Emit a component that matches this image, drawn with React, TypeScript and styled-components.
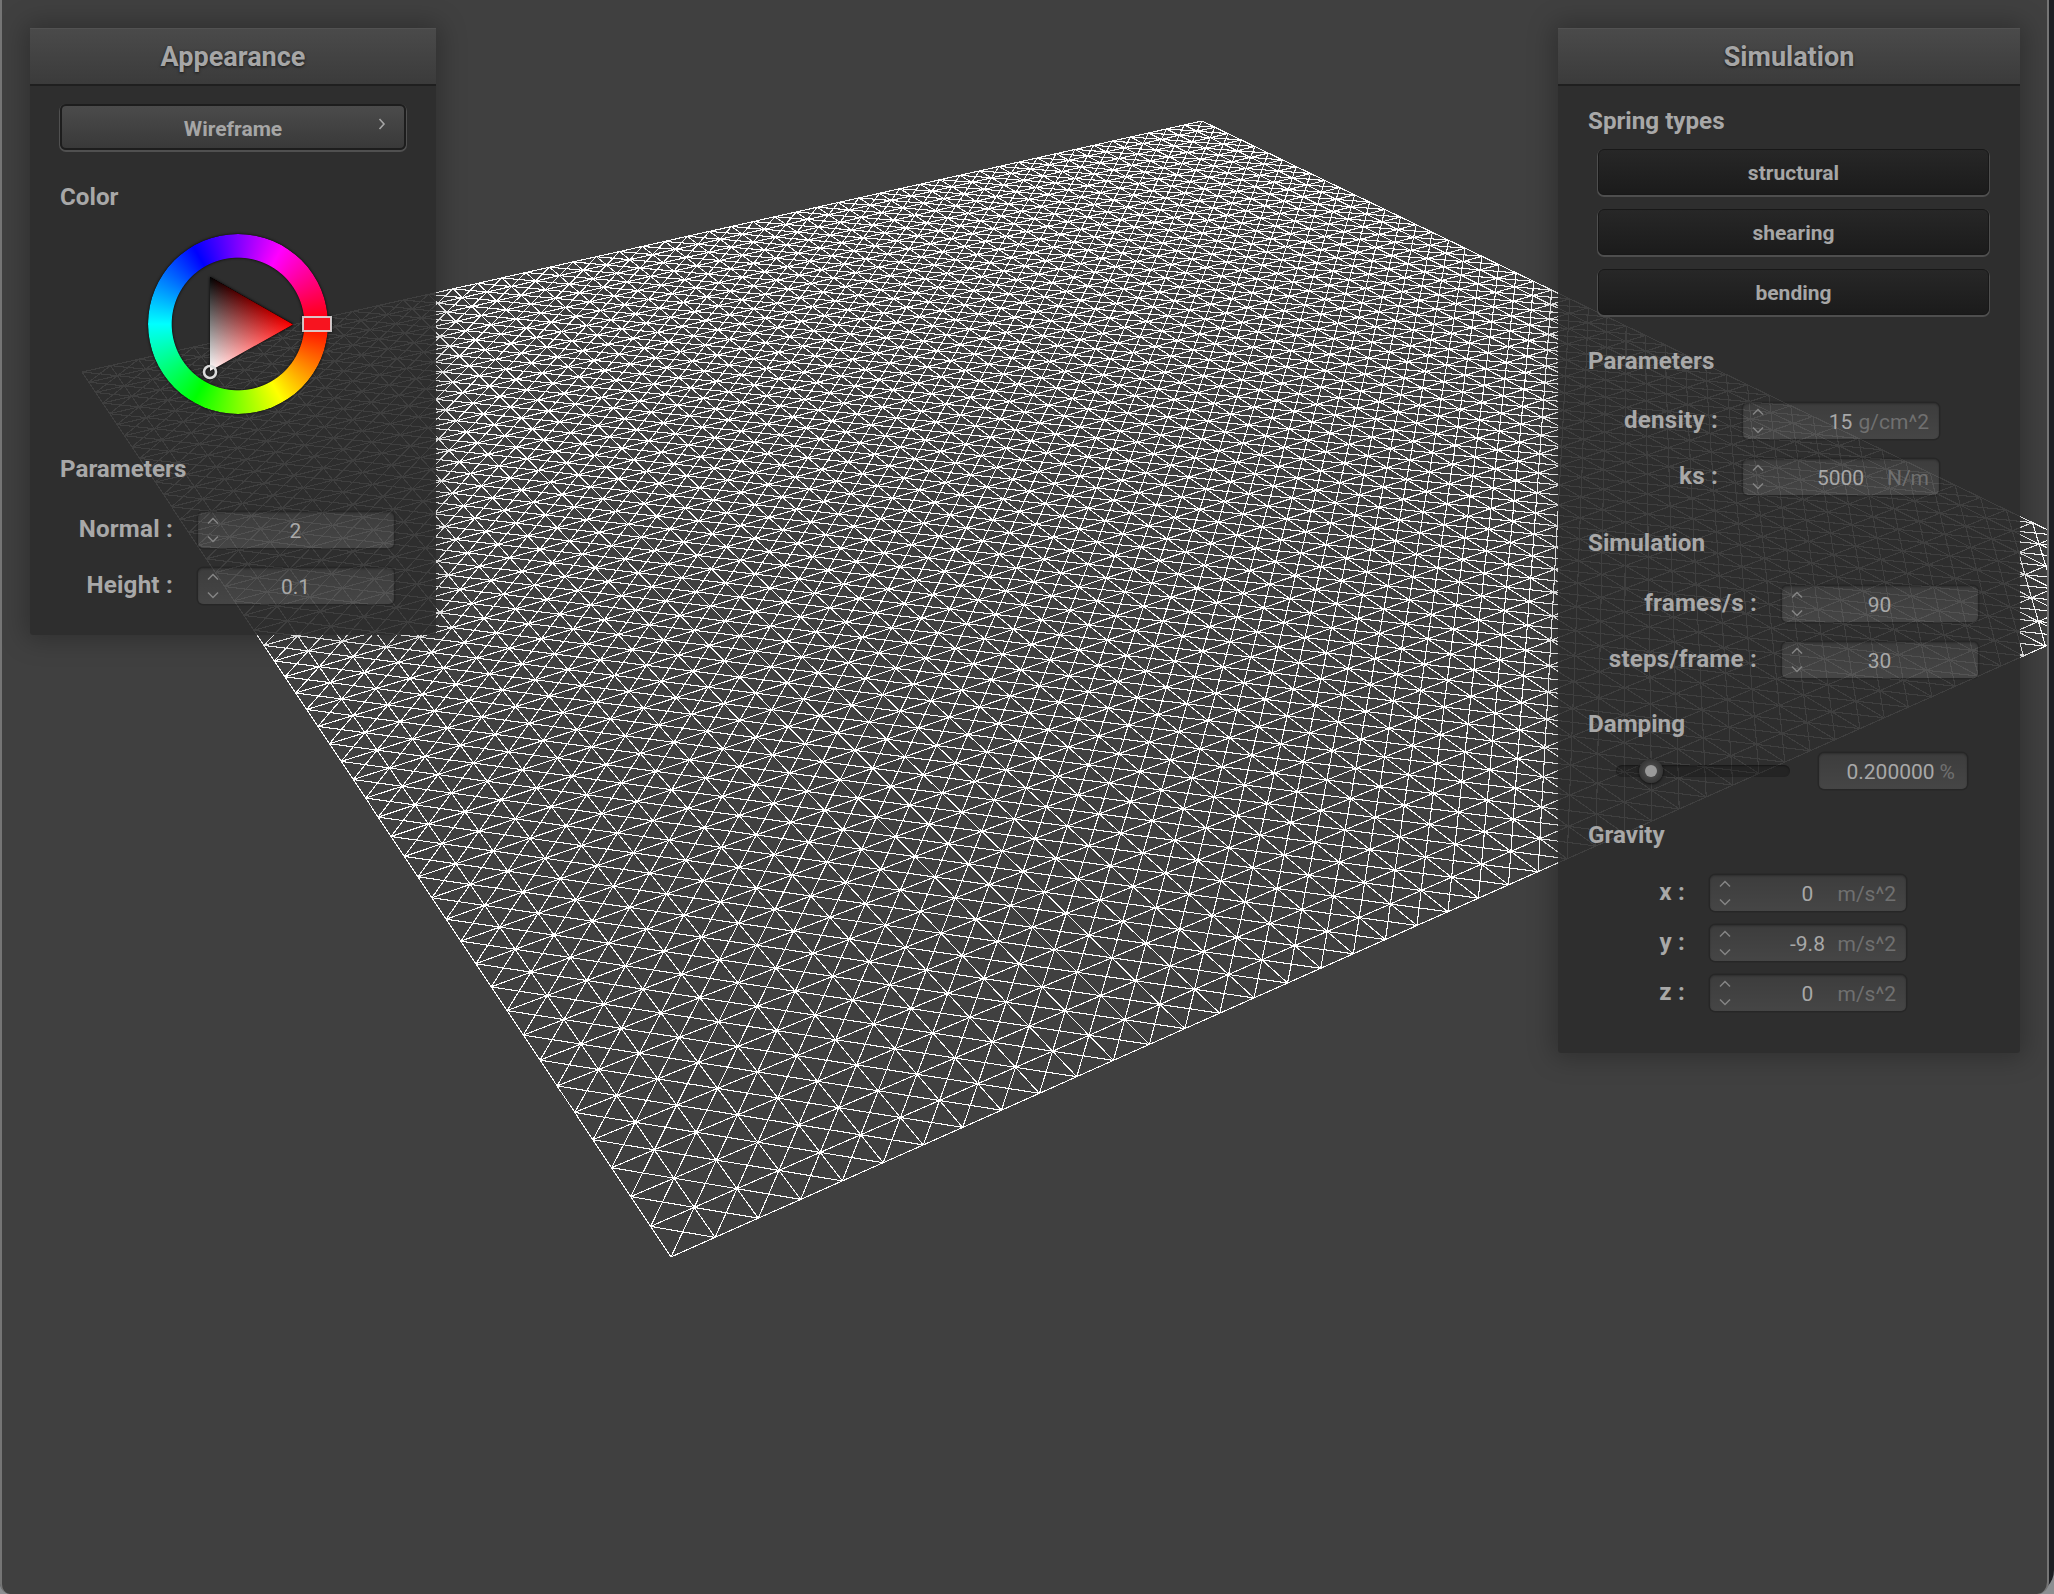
import styled, { createGlobalStyle } from 'styled-components';

const GlobalStyle = createGlobalStyle`
  html, body {
    margin: 0;
    padding: 0;
    background: #8b8e91;
    overflow: hidden;
  }
  body {
    font-family: Roboto, "Liberation Sans", sans-serif;
  }
`;

// projective map of the cloth quad, taken from the four corners on screen
const CORNERS = { c: [671, 1257], b: [2172, 590], a: [1202, 121], d: [82, 372] };
const CELLS = 50;

const buildMesh = () => {
  const { a, b, c, d } = CORNERS;
  const sx = c[0] - b[0] + a[0] - d[0];
  const sy = c[1] - b[1] + a[1] - d[1];
  const dx1 = b[0] - a[0];
  const dx2 = d[0] - a[0];
  const dy1 = b[1] - a[1];
  const dy2 = d[1] - a[1];
  const den = dx1 * dy2 - dx2 * dy1;
  const g = (sx * dy2 - dx2 * sy) / den;
  const h = (dx1 * sy - sx * dy1) / den;
  const project = (i: number, j: number) => {
    const u = i / CELLS;
    const v = j / CELLS;
    const w = g * u + h * v + 1;
    const x = ((b[0] - c[0] + g * b[0]) * u + (d[0] - c[0] + h * d[0]) * v + c[0]) / w;
    const y = ((b[1] - c[1] + g * b[1]) * u + (d[1] - c[1] + h * d[1]) * v + c[1]) / w;
    return `${x.toFixed(1)} ${y.toFixed(1)}`;
  };
  const parts: string[] = [];
  for (let i = 0; i <= CELLS; i++) {
    for (let j = 0; j <= CELLS; j++) {
      if (i < CELLS) parts.push(`M${project(i, j)}L${project(i + 1, j)}`);
      if (j < CELLS) parts.push(`M${project(i, j)}L${project(i, j + 1)}`);
      if (i < CELLS && j < CELLS) {
        parts.push(`M${project(i, j)}L${project(i + 1, j + 1)}`);
        parts.push(`M${project(i + 1, j)}L${project(i, j + 1)}`);
      }
    }
  }
  return parts.join('');
};

const meshPath = buildMesh();

const Frame = styled.div`
  width: 2054px;
  height: 1594px;
  box-sizing: border-box;
  padding-right: 5px;
  background: #1c1e22;
  border-bottom-right-radius: 24px;
  border-bottom-left-radius: 12px;
`;

const Desktop = styled.main`
  position: relative;
  height: 100%;
  box-sizing: border-box;
  background: #404040;
  border-left: 2px solid #757575;
  border-right: 2px solid #757575;
  border-bottom-right-radius: 12px;
  border-bottom-left-radius: 10px;
  overflow: hidden;
`;

const MeshLayer = styled.svg`
  position: absolute;
  left: -2px;
  top: 0;
`;

const Panel = styled.section<{ $left: number; $width: number }>`
  position: absolute;
  top: 28px;
  left: ${(p) => p.$left}px;
  width: ${(p) => p.$width}px;
  background: rgba(44, 44, 44, 0.91);
  border-radius: 3px;
  box-shadow: 0 0 26px 5px rgba(0, 0, 0, 0.26);
`;

const TitleBar = styled.header`
  height: 55px;
  display: flex;
  align-items: center;
  justify-content: center;
  background: linear-gradient(#4a4a4a, #3b3b3b);
  border-top: 1px solid #525252;
  border-bottom: 2px solid #1f1f1f;
  box-sizing: content-box;
  font-size: 27px;
  font-weight: 700;
  color: #a6a6a6;
  text-shadow: 0 1px 3px rgba(0, 0, 0, 0.65);
`;

const PanelBody = styled.div<{ $pad: number; $bottom: number }>`
  padding: 0 ${(p) => p.$pad}px ${(p) => p.$bottom}px;
`;

const Heading = styled.h3<{ $top: number }>`
  margin: ${(p) => p.$top}px 0 0;
  height: 28px;
  line-height: 28px;
  font-size: 24.2px;
  font-weight: 700;
  color: #a8a8a8;
`;

const Dropdown = styled.div`
  position: relative;
  height: 46px;
  width: 346px;
  margin-top: 18px;
  box-sizing: border-box;
  display: flex;
  align-items: center;
  justify-content: center;
  background: linear-gradient(#4b4b4b, #393939);
  border: 2px solid #1d1d1d;
  border-radius: 6px;
  box-shadow: 0 1px 0 1px #505050;
  font-size: 21px;
  font-weight: 700;
  color: #a6a6a6;
  padding-top: 4px;
`;

const DropdownChevron = styled.svg`
  position: absolute;
  right: 18px;
  top: 12px;
`;

const WheelWrap = styled.div`
  position: relative;
  width: 180px;
  height: 180px;
  margin: 23px 0 0 88px;
  filter: drop-shadow(0 0 1.5px rgba(0, 0, 0, 0.9));
`;

const WheelRing = styled.div`
  width: 100%;
  height: 100%;
  border-radius: 50%;
  background: conic-gradient(from 90deg, #ff0000, #ffff00, #00ff00, #00ffff, #0000ff, #ff00ff, #ff0000);
  -webkit-mask: radial-gradient(closest-side, transparent 73.2%, #000 74.2%);
  mask: radial-gradient(closest-side, transparent 73.2%, #000 74.2%);
`;

const WheelOverlay = styled.svg`
  position: absolute;
  left: 0;
  top: 0;
  overflow: visible;
`;

const TriangleGroup = styled.g`
  isolation: isolate;
`;

const TriangleLight = styled.path`
  mix-blend-mode: plus-lighter;
`;

const FieldList = styled.div<{ $top: number; $gap: number }>`
  margin-top: ${(p) => p.$top}px;
  display: flex;
  flex-direction: column;
  gap: ${(p) => p.$gap}px;
`;

const FieldRow = styled.div<{ $label: number }>`
  display: grid;
  grid-template-columns: ${(p) => p.$label}px 196px;
  column-gap: 25px;
  align-items: center;
`;

const FieldLabel = styled.label`
  text-align: right;
  padding-bottom: 2px;
  font-size: 24.2px;
  font-weight: 700;
  letter-spacing: 0.2px;
  color: #a8a8a8;
  white-space: nowrap;
`;

const NumberBox = styled.div`
  height: 36px;
  box-sizing: border-box;
  padding: 2px 10px 0 9px;
  display: grid;
  grid-template-columns: 1fr auto 1fr;
  align-items: center;
  background: linear-gradient(rgba(255, 255, 255, 0.07), rgba(255, 255, 255, 0.115));
  border-radius: 5px;
  box-shadow: 0 0 0 1.5px rgba(0, 0, 0, 0.16), inset 0 1px 2px rgba(0, 0, 0, 0.25);
  font-size: 21px;
  color: #a8a8a8;
`;

const Spinner = styled.svg`
  display: block;
  margin-top: -2px;
`;

const Unit = styled.span`
  justify-self: end;
  color: #707070;
`;

const SpringButton = styled.button`
  display: block;
  height: 46px;
  width: 391px;
  margin-left: 10px;
  padding: 2px 0 0;
  box-sizing: border-box;
  background: linear-gradient(#272727, #1b1b1b);
  border: 1px solid #181818;
  border-radius: 6px;
  box-shadow: 0 1px 0 1px #4e4e4e;
  font-family: inherit;
  font-size: 21px;
  font-weight: 700;
  color: #a6a6a6;
`;

const ButtonStack = styled.div`
  margin-top: 14px;
  display: flex;
  flex-direction: column;
  gap: 14px;
`;

const SliderRow = styled.div`
  margin: 15px 0 0 28px;
  display: flex;
  align-items: center;
  gap: 29px;
`;

const SliderTrack = styled.div`
  position: relative;
  width: 174px;
  height: 12px;
  background: rgba(0, 0, 0, 0.2);
  border-radius: 6px;
  box-shadow: inset 0 1px 2px rgba(0, 0, 0, 0.4);
`;

const SliderKnob = styled.div`
  position: absolute;
  left: 23px;
  top: -6px;
  width: 24px;
  height: 24px;
  display: flex;
  align-items: center;
  justify-content: center;
  border-radius: 50%;
  background: radial-gradient(circle, #5a5a5a, #262626);
  box-shadow: 0 1px 3px rgba(0, 0, 0, 0.7);

  &::after {
    content: '';
    width: 12px;
    height: 12px;
    border-radius: 50%;
    background: #9a9a9a;
  }
`;

const ReadoutBox = styled(NumberBox)`
  width: 148px;
  padding-right: 12px;
  display: flex;
  justify-content: flex-end;
  gap: 5px;
`;

const SpinnerIcon = () => (
  <Spinner width="12" height="26" viewBox="0 0 12 26" fill="none" stroke="#858585" strokeWidth="1.5">
    <path d="M1 6.5 6 1.5l5 5" />
    <path d="M1 19.5l5 5 5-5" />
  </Spinner>
);

type FieldProps = { name: string; value: string; unit?: string; labelWidth: number };

const Field = ({ name, value, unit, labelWidth }: FieldProps) => (
  <FieldRow $label={labelWidth}>
    <FieldLabel>{name} :</FieldLabel>
    <NumberBox>
      <SpinnerIcon />
      <span>{value}</span>
      {unit ? <Unit>{unit}</Unit> : <span />}
    </NumberBox>
  </FieldRow>
);

const TRIANGLE = 'M62 43 145 90.5 62 137Z';

const ColorWheel = () => (
  <WheelWrap>
    <WheelRing />
    <WheelOverlay width="180" height="180" viewBox="0 0 180 180">
      <defs>
        <linearGradient id="triWhite" gradientUnits="userSpaceOnUse" x1="62" y1="137" x2="103.5" y2="66.7">
          <stop offset="0" stopColor="#fff" />
          <stop offset="1" stopColor="#000" />
        </linearGradient>
        <linearGradient id="triRed" gradientUnits="userSpaceOnUse" x1="145" y1="90.5" x2="62" y2="90">
          <stop offset="0" stopColor="#ff0000" />
          <stop offset="1" stopColor="#000" />
        </linearGradient>
      </defs>
      <TriangleGroup>
        <path d={TRIANGLE} fill="#000" />
        <TriangleLight d={TRIANGLE} fill="url(#triWhite)" />
        <TriangleLight d={TRIANGLE} fill="url(#triRed)" />
      </TriangleGroup>
      <circle cx="62" cy="138" r="6" fill="none" stroke="#dcdcdc" strokeWidth="2.6" />
      <rect x="155" y="83" width="28" height="14" fill="#f7141f" stroke="#d8d8d8" strokeOpacity="0.9" strokeWidth="2" />
    </WheelOverlay>
  </WheelWrap>
);

export default function App() {
  return (
    <Frame>
      <GlobalStyle />
      <Desktop>
        <MeshLayer width="2047" height="1594" viewBox="0 0 2047 1594">
          <path d={meshPath} fill="none" stroke="#fff" strokeWidth="1.1" shapeRendering="crispEdges" />
        </MeshLayer>

        <Panel $left={28} $width={406}>
          <TitleBar>Appearance</TitleBar>
          <PanelBody $pad={30} $bottom={31}>
            <Dropdown>
              Wireframe
              <DropdownChevron width="8" height="12" viewBox="0 0 8 12" fill="none" stroke="#a6a6a6" strokeWidth="1.6">
                <path d="M1.5 1 6 6l-4.5 5" />
              </DropdownChevron>
            </Dropdown>
            <Heading $top={33}>Color</Heading>
            <ColorWheel />
            <Heading $top={41}>Parameters</Heading>
            <FieldList $top={29} $gap={20}>
              <Field name="Normal" value="2" labelWidth={113} />
              <Field name="Height" value="0.1" labelWidth={113} />
            </FieldList>
          </PanelBody>
        </Panel>

        <Panel $left={1556} $width={462}>
          <TitleBar>Simulation</TitleBar>
          <PanelBody $pad={30} $bottom={42}>
            <Heading $top={21}>Spring types</Heading>
            <ButtonStack>
              <SpringButton>structural</SpringButton>
              <SpringButton>shearing</SpringButton>
              <SpringButton>bending</SpringButton>
            </ButtonStack>
            <Heading $top={32}>Parameters</Heading>
            <FieldList $top={28} $gap={20}>
              <Field name="density" value="15" unit="g/cm^2" labelWidth={130} />
              <Field name="ks" value="5000" unit="N/m" labelWidth={130} />
            </FieldList>
            <Heading $top={34}>Simulation</Heading>
            <FieldList $top={29} $gap={20}>
              <Field name="frames/s" value="90" labelWidth={169} />
              <Field name="steps/frame" value="30" labelWidth={169} />
            </FieldList>
            <Heading $top={32}>Damping</Heading>
            <SliderRow>
              <SliderTrack>
                <SliderKnob />
              </SliderTrack>
              <ReadoutBox>
                <span>0.200000</span>
                <Unit>%</Unit>
              </ReadoutBox>
            </SliderRow>
            <Heading $top={32}>Gravity</Heading>
            <FieldList $top={26} $gap={14}>
              <Field name="x" value="0" unit="m/s^2" labelWidth={97} />
              <Field name="y" value="-9.8" unit="m/s^2" labelWidth={97} />
              <Field name="z" value="0" unit="m/s^2" labelWidth={97} />
            </FieldList>
          </PanelBody>
        </Panel>
      </Desktop>
    </Frame>
  );
}
